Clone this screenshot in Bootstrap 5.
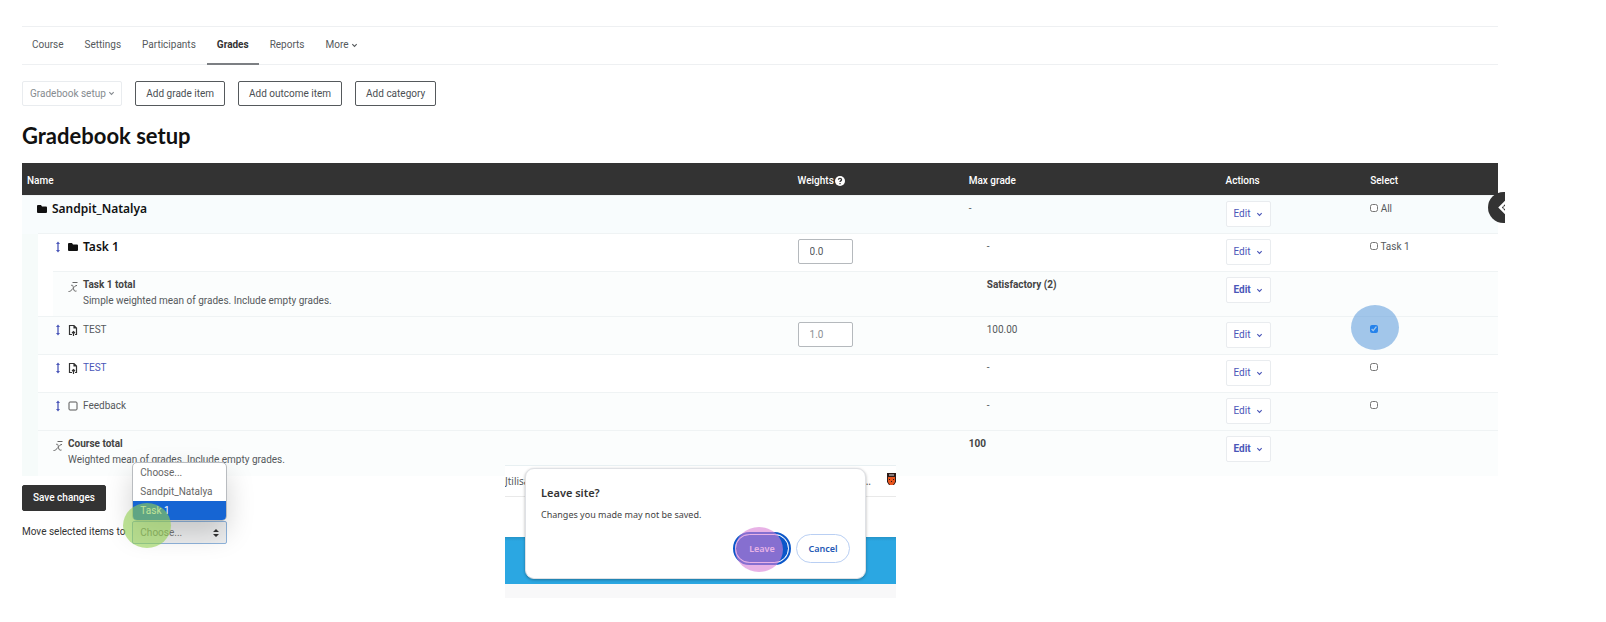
<!DOCTYPE html>
<html lang="en">
<head>
<meta charset="utf-8">
<meta name="viewport" content="width=device-width, initial-scale=1">
<title>Gradebook setup</title>
<link rel="stylesheet" href="https://cdn.jsdelivr.net/npm/bootstrap@5.3.0/dist/css/bootstrap.min.css">
<style>
  body { font: 10px/16px Roboto, "Liberation Sans", sans-serif; color: #55595c; background: #fff; }
  .page-wrap { padding: 26px 108px 24px 22px; }
  .course-nav { border: solid #eef0f2; border-width: 1px 0; height: 39px; column-gap: 1px; }
  .course-nav .nav-link { color: #55595c; padding: 10px; height: 38px; border-bottom: 2px solid transparent; }
  .course-nav .nav-link.active { color: #333; font-weight: 700; border-color: #7c7f83; }
  .chev { width: 7px; height: 7px; fill: none; stroke: currentColor; stroke-width: 1.3; }
  .btn { --bs-btn-font-size: 10px; --bs-btn-line-height: 16px; --bs-btn-border-radius: 2px; white-space: nowrap; }
  .toolbar { margin-top: 16px; gap: 13px; }
  .btn-tool { --bs-btn-color: #4b4f53; --bs-btn-border-color: #55595c; padding: 4px 10px; height: 25px; }
  .btn-setup { --bs-btn-color: #868b90; --bs-btn-border-color: #e9ecef; padding: 3px 6px 3px 7px; height: 25px; }
  h1 { font: 700 22px/26px Lato, sans-serif; color: #111; margin: 17px 0 14px; }
  .grade-table { table-layout: fixed; width: 100%; margin: 0; line-height: 16px; }
  .grade-table th { background: #333; color: #fff; font-weight: 500; height: 32px; padding: 10px 5px 6px; }
  .grade-table td { background: #fbfdfd; border-top: 1px solid #eff3f4; height: 38px; padding: 5px; vertical-align: top; }
  .grade-table .row-white td { background: #fff; }
  .grade-table .row-root td { background: #f8fcfd; }
  .grade-table .row-total td { height: 45px; }
  .grade-table td.rail { background: #f6fbfa; padding: 0; border: 0; }
  .grade-table td.rail-inner { background: #fff; }
  .grade-table td.inset-max { padding-left: 23px; }
  .help-dot { margin-left: 1px; }
  .item-name { gap: 5px; color: #55595c; padding-left: 10px; }
  .item-name a { color: #4a56b8; text-decoration: none; }
  .total { font-weight: 700; color: #444; }
  .cat-name { font: 600 12px/16px "Noto Sans", sans-serif; color: #111; }
  .glyph { width: 10px; height: 12px; flex: none; }
  .mover { color: #4a56b8; }
  .btn-edit { --bs-btn-color: #4a56b8; --bs-btn-border-color: #e9ecef; --bs-btn-bg: #fff; padding: 4px 7px; height: 26px; width: 45px; display: flex; align-items: center; justify-content: space-between; }
  .weight { width: 55px; height: 25px; font-size: 10px; line-height: 16px; padding: 3px 11px; border: 1px solid #b5b9bd; border-radius: 2px; color: #55595c; }
  .weight:disabled { background: #fff; color: #8b8f93; }
  input[type=checkbox] { width: 8px; height: 8px; margin: 0; }
  .drawer-clip { position: absolute; top: 192px; left: 100%; width: 17px; height: 31px; margin-left: -118px; overflow: hidden; }
  .drawer-toggle { width: 31px; height: 31px; background: #333; color: #fff; border: 0; border-radius: 50%; padding: 0; display: block; }
  .halo { position: absolute; border-radius: 50%; pointer-events: none; width: 48px; height: 45px; }
  .halo-blue { background: #4a90d880; left: -19px; top: -19px; }
  .halo-green { background: #92d05099; left: -9px; bottom: -4px; }
  .halo-pink { background: #d97fd699; left: 0; top: -7px; }
  .btn-save { --bs-btn-bg: #333; --bs-btn-color: #fff; --bs-btn-border-color: #333; --bs-btn-font-weight: 500; padding: 4px 10px; height: 26px; margin-top: 9px; }
  .move-row { margin-top: 10px; gap: 7px; color: #333; }
  .move-select { width: 95px; height: 23px; font-size: 10px; line-height: 15px; padding: 3px 7px; color: #777; border: 1px solid #8fb4dc; border-radius: 2px; background: #eeeff0; appearance: none; display: block; }
  .move-arrows { position: absolute; right: 8px; top: 8px; width: 6px; height: 8px; }
  .option-menu { position: absolute; left: 0; bottom: 23px; width: 95px; height: 59px; background: #fff; border: 1px solid #b9bcc0; border-radius: 5px; box-shadow: 0 12px 28px #0000002e; color: #666; overflow: hidden; margin: 0; padding: 0; list-style: none; line-height: 19px; }
  .option-menu li { padding: 0 7px; }
  .option-menu .picked { background: #1665d3; color: #fff; }
  .site-window { position: absolute; left: 505px; top: 465px; width: 391px; height: 133px; background: #fff; border-top: 1px solid #e8f0f2; overflow: hidden; font-family: "Noto Sans", sans-serif; }
  .tab-strip { height: 31px; border-bottom: 1px solid #e9e9e9; padding: 7px 0; }
  .site-banner { height: 47px; margin-top: 40px; background: linear-gradient(#2595c9, #2ba7e2 4px); }
  .site-foot { height: 14px; background: #f8f8f9; }
  .leave-box { position: absolute; left: 20px; top: 2px; width: 341px; height: 111px; background: #fff; border: 1px solid #dfe1e5; border-radius: 9px; box-shadow: 0 1px 3px #00000050; padding: 15px; color: #444; }
  .leave-box h2 { font: 600 11px/18px "Noto Sans", sans-serif; color: #333; margin: 0 0 5px; }
  .leave-box p { margin: 0; font-size: 9px; line-height: 16px; }
  .dialog-actions { gap: 7px; margin-top: 11px; }
  .dialog-actions .btn { --bs-btn-border-radius: 17px; --bs-btn-font-weight: 600; --bs-btn-font-size: 9px; height: 29px; padding: 0; display: block; }
  .dialog-actions .btn-leave { width: 54px; --bs-btn-bg: #0b57c9; --bs-btn-color: #fff; --bs-btn-border-color: #fff; outline: 2px solid #0b57c9; }
  .dialog-actions .btn-stay { width: 54px; --bs-btn-color: #2459b5; --bs-btn-border-color: #b9cff3; }
</style>
</head>
<body class="position-relative min-vh-100">
<svg class="d-none" aria-hidden="true">
  <symbol id="chev" viewBox="0 0 8 8"><path d="M1.500 2.500 4 5 6.500 2.500"/></symbol>
  <symbol id="folder" viewBox="0 0 10 12"><path d="M0 3a1 1 0 0 1 1-1h3l1 1.500h4a1 1 0 0 1 1 1V9a1 1 0 0 1-1 1H1a1 1 0 0 1-1-1z" fill="#111"/></symbol>
  <symbol id="mover" viewBox="0 0 10 12"><path d="M5 2v8" stroke="currentColor" stroke-width="1.300"/><path d="M5 .5 7 3H3zM5 11.500 3 9h4z" fill="currentColor"/></symbol>
  <symbol id="mean" viewBox="0 0 10 12"><path d="M4.500 1.500h5M3 4.500c2-1 2 .5 2.500 3S6.500 10.500 8.500 10M9 4.500C6 4 4 11 .5 10.500" stroke="#666" fill="none"/></symbol>
  <symbol id="assign" viewBox="0 0 10 12"><path d="M4 10.500H1.500V1.500H6L8.500 4v6.500H7M6 1.500V4H8.500M5.500 12V7.500M4 9 5.500 7.500 7 9" fill="none" stroke="#333" stroke-width="1.200"/></symbol>
  <symbol id="square" viewBox="0 0 10 12"><rect x="1" y="2" width="8" height="8" rx="1" fill="none" stroke="#555"/></symbol>
</svg>

<main class="page-wrap">
  <nav class="nav course-nav" aria-label="Course">
    <a class="nav-link" href="#">Course</a>
    <a class="nav-link" href="#">Settings</a>
    <a class="nav-link" href="#">Participants</a>
    <a class="nav-link active" aria-current="page" href="#">Grades</a>
    <a class="nav-link" href="#">Reports</a>
    <a class="nav-link" href="#">More <svg class="chev"><use href="#chev"/></svg></a>
  </nav>

  <div class="toolbar d-flex">
    <button type="button" class="btn btn-setup">Gradebook setup <svg class="chev"><use href="#chev"/></svg></button>
    <button type="button" class="btn btn-tool">Add grade item</button>
    <button type="button" class="btn btn-tool">Add outcome item</button>
    <button type="button" class="btn btn-tool">Add category</button>
  </div>

  <h1>Gradebook setup</h1>

  <table class="grade-table">
    <colgroup>
      <col style="width:16px"><col style="width:15px"><col><col style="width:11.600%"><col style="width:17.400%"><col style="width:9.800%"><col style="width:9%">
    </colgroup>
    <thead>
      <tr>
        <th colspan="3">Name</th>
        <th>Weights<svg class="help-dot" width="10" height="10" viewBox="0 0 10 10" aria-hidden="true"><circle cx="5" cy="5" r="5" fill="#fff"/><path d="M3.400 3.800C3.500 1.800 6.700 2 6.500 3.900 6.400 4.900 5 4.900 5 6M5 7v1.200" fill="none" stroke="#333" stroke-width="1.300"/></svg></th>
        <th>Max grade</th><th>Actions</th><th>Select</th>
      </tr>
    </thead>
    <tbody>
      <tr class="row-root">
        <td colspan="3"><div class="item-name d-flex align-items-center"><svg class="glyph"><use href="#folder"/></svg><span class="cat-name">Sandpit_Natalya</span></div></td>
        <td></td><td>-</td>
        <td><button type="button" class="btn btn-edit">Edit <svg class="chev"><use href="#chev"/></svg></button></td>
        <td><label><input type="checkbox"> All</label></td>
      </tr>
      <tr class="row-white">
        <td class="rail" rowspan="6"></td>
        <td colspan="2"><div class="item-name d-flex align-items-center"><svg class="glyph mover"><use href="#mover"/></svg><svg class="glyph"><use href="#folder"/></svg><span class="cat-name">Task 1</span></div></td>
        <td><input class="weight" type="text" value="0.0" aria-label="Weight of Task 1"></td>
        <td class="inset-max">-</td>
        <td><button type="button" class="btn btn-edit">Edit <svg class="chev"><use href="#chev"/></svg></button></td>
        <td><label><input type="checkbox"> Task 1</label></td>
      </tr>
      <tr class="row-total">
        <td class="rail rail-inner"></td>
        <td><div class="item-name d-flex"><svg class="glyph mt-1"><use href="#mean"/></svg><div><div class="total">Task 1 total</div>Simple weighted mean of grades. Include empty grades.</div></div></td>
        <td></td><td class="inset-max total">Satisfactory (2)</td>
        <td><button type="button" class="btn btn-edit fw-bold">Edit <svg class="chev"><use href="#chev"/></svg></button></td>
        <td></td>
      </tr>
      <tr>
        <td colspan="2"><div class="item-name d-flex align-items-center"><svg class="glyph mover"><use href="#mover"/></svg><svg class="glyph"><use href="#assign"/></svg><span>TEST</span></div></td>
        <td><input class="weight" type="text" value="1.0" aria-label="Weight of TEST" disabled></td>
        <td class="inset-max">100.00</td>
        <td><button type="button" class="btn btn-edit">Edit <svg class="chev"><use href="#chev"/></svg></button></td>
        <td><span class="position-relative"><input type="checkbox" aria-label="Select TEST" checked><span class="halo halo-blue"></span></span></td>
      </tr>
      <tr class="row-white">
        <td colspan="2"><div class="item-name d-flex align-items-center"><svg class="glyph mover"><use href="#mover"/></svg><svg class="glyph"><use href="#assign"/></svg><a href="#">TEST</a></div></td>
        <td></td><td class="inset-max">-</td>
        <td><button type="button" class="btn btn-edit">Edit <svg class="chev"><use href="#chev"/></svg></button></td>
        <td><input type="checkbox" aria-label="Select linked TEST"></td>
      </tr>
      <tr>
        <td colspan="2"><div class="item-name d-flex align-items-center"><svg class="glyph mover"><use href="#mover"/></svg><svg class="glyph"><use href="#square"/></svg><span>Feedback</span></div></td>
        <td></td><td class="inset-max">-</td>
        <td><button type="button" class="btn btn-edit">Edit <svg class="chev"><use href="#chev"/></svg></button></td>
        <td><input type="checkbox" aria-label="Select Feedback"></td>
      </tr>
      <tr class="row-total">
        <td colspan="2"><div class="item-name d-flex"><svg class="glyph mt-1"><use href="#mean"/></svg><div><div class="total">Course total</div>Weighted mean of grades. Include empty grades.</div></div></td>
        <td></td><td class="total">100</td>
        <td><button type="button" class="btn btn-edit fw-bold">Edit <svg class="chev"><use href="#chev"/></svg></button></td>
        <td></td>
      </tr>
    </tbody>
  </table>

  <button type="button" class="btn btn-save">Save changes</button>
  <div class="move-row d-flex align-items-center">
    <label for="moveto">Move selected items to</label>
    <div class="position-relative">
      <select id="moveto" class="move-select"><option>Choose...</option></select>
      <svg class="move-arrows" viewBox="0 0 6 8" aria-hidden="true"><path d="M3 0 6 3H0zM3 8 0 5h6z" fill="#333"/></svg>
      <ul class="option-menu"><li>Choose...</li><li>Sandpit_Natalya</li><li class="picked">Task 1</li></ul>
      <span class="halo halo-green"></span>
    </div>
  </div>
</main>

<div class="drawer-clip">
  <button type="button" class="drawer-toggle" aria-label="Open block drawer"><svg width="31" height="31" viewBox="0 0 31 31"><path d="M18 9.500 12 15.500 18 21.500M15.500 15.500h6" fill="none" stroke="#fff" stroke-width="2.500"/></svg></button>
</div>

<section class="site-window">
  <div class="tab-strip d-flex justify-content-between">
    <span>Jtilisa</span>
    <span class="d-flex gap-3">...<svg width="9" height="13" viewBox="0 0 9 13" aria-hidden="true"><path d="M0 0h9v9L7 12H2L0 9z" fill="#2c1a18"/><path d="M1 4h7v5l-2 3H3L1 9z" fill="#e8541c"/><path d="M2 1.500h5v1H2z" fill="#ddd"/><path d="M2 6h1v1H2zM6 6h1v1H6zM4 8h1v1H4z" fill="#2c1a18"/></svg></span>
  </div>
  <div class="site-banner"></div>
  <div class="site-foot"></div>
  <div class="leave-box" role="dialog" aria-labelledby="leave-title">
    <h2 id="leave-title">Leave site?</h2>
    <p>Changes you made may not be saved.</p>
    <div class="dialog-actions d-flex justify-content-end">
      <span class="position-relative"><button type="button" class="btn btn-leave">Leave</button><span class="halo halo-pink"></span></span>
      <button type="button" class="btn btn-stay">Cancel</button>
    </div>
  </div>
</section>
<script src="https://cdn.jsdelivr.net/npm/bootstrap@5.3.0/dist/js/bootstrap.bundle.min.js"></script>
</body>
</html>
